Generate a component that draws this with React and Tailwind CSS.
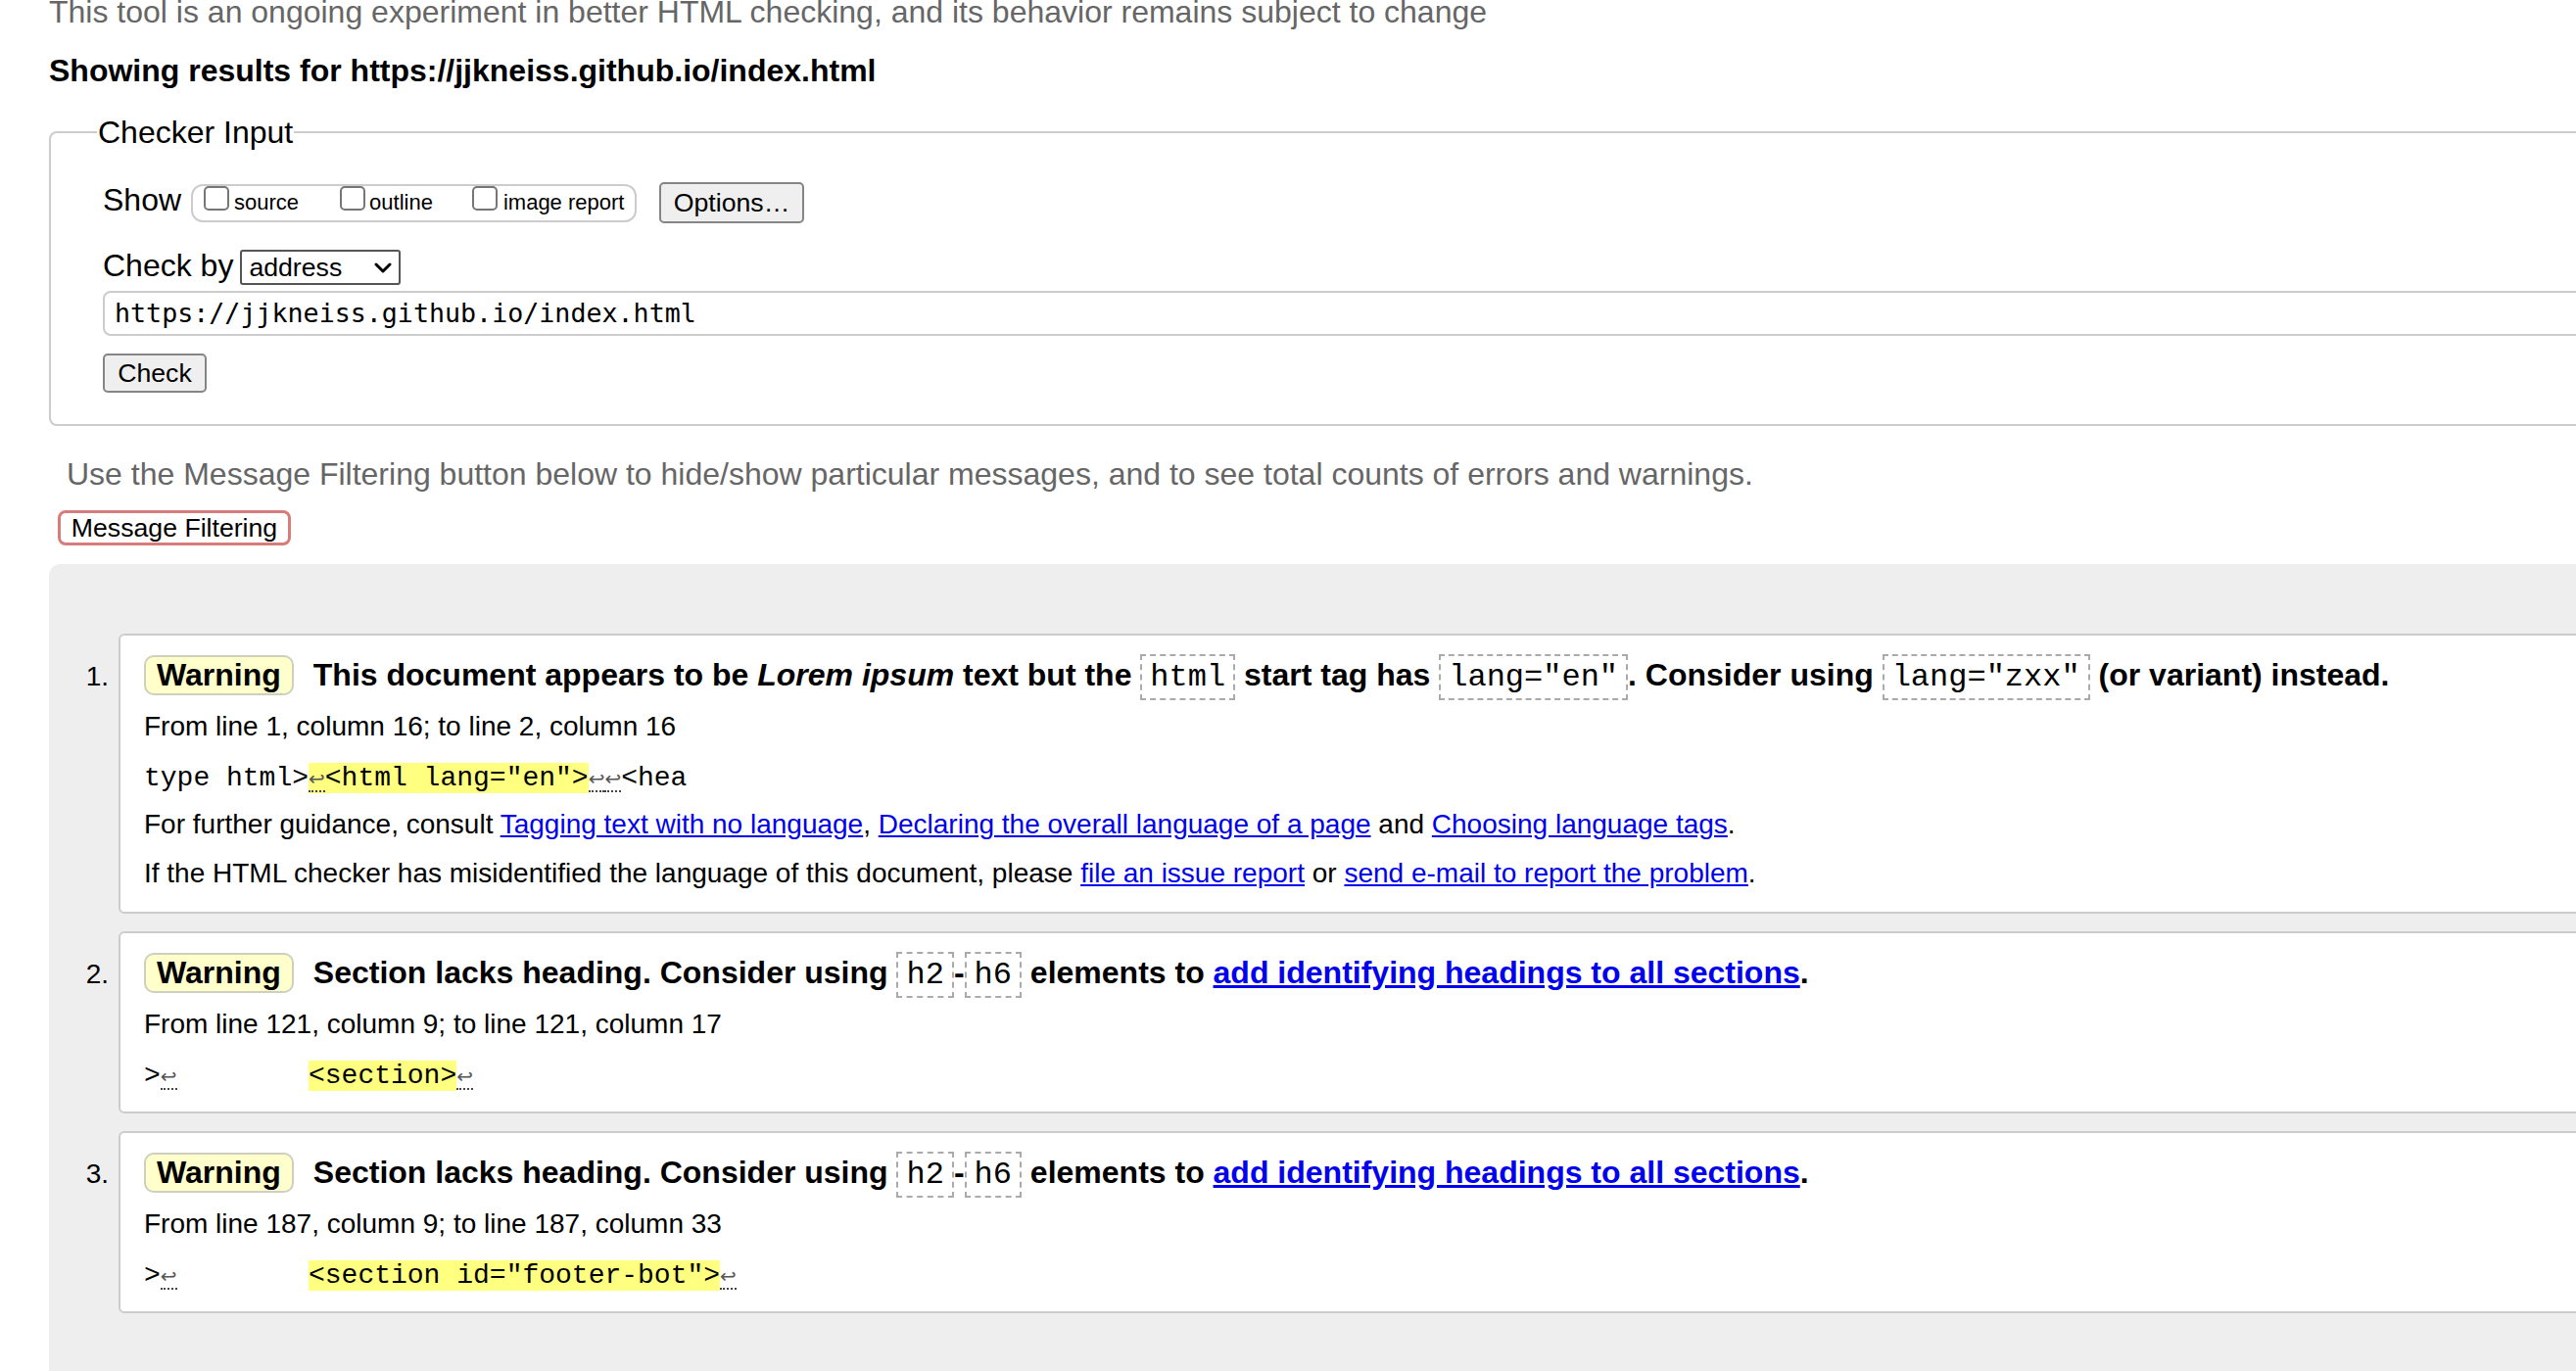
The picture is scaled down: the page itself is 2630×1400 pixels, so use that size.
import React from "react";

const Code = ({ children }) => (
  <code className="font-['Liberation_Mono',monospace] font-normal leading-none px-[8px] py-[3px] border-2 border-dashed border-[#aaa]">
    {children}
  </code>
);

const Arrow = () => (
  <span className="font-['DejaVu_Sans',sans-serif] text-[20px] leading-none text-[#555] border-b-2 border-dotted border-[#444]">↩</span>
);

const Hl = ({ children }) => <span className="bg-[#ffff80]">{children}</span>;

const Badge = () => (
  <span className="inline-block border-2 border-[#cfcfbf] bg-[#ffffcc] rounded-[10px] px-[11px] py-[2px] leading-[33px] mr-[20px]">
    Warning
  </span>
);

const A = ({ children }) => (
  <a href="#" className="text-[#0000ee] underline">
    {children}
  </a>
);

function Message({ n, title, children }) {
  return (
    <li className="flex items-baseline">
      <div className="w-[61px] shrink-0 text-right text-[28px] leading-[44px]">{n}.</div>
      <div className="ml-[10px] flex-1 bg-white border-2 border-[#ccc] rounded-[6px] pl-[24px] pt-[18px] pb-[23px]">
        <p className="text-[32px] font-bold leading-[44px] whitespace-nowrap">
          <Badge />
          {title}
        </p>
        {children}
      </div>
    </li>
  );
}

const Cb = () => <span className="w-[26px] h-[25px] shrink-0 rounded-[5px] border-2 border-[#767676] bg-white" />;

export default function App() {
  return (
    <div className="w-[2630px] h-[1400px] overflow-hidden bg-white text-black font-['Liberation_Sans',Arial,sans-serif] text-[32px]">
      <div className="ml-[50px] w-[2700px]">
        <p className="mt-[-6px] leading-[36px] text-[#666] whitespace-nowrap">
          This tool is an ongoing experiment in better HTML checking, and its behavior remains subject to change
        </p>
        <p className="mt-[24px] leading-[36px] font-bold whitespace-nowrap">
          Showing results for https://jjkneiss.github.io/index.html
        </p>

        <fieldset className="mt-[27px] border-2 border-[#ccc] rounded-[8px] pl-[53px] pb-[32px]">
          <legend className="ml-[-6px] px-[1px] leading-[36px]">Checker Input</legend>
          <div className="mt-[33px] flex items-start h-[42px]">
            <span className="leading-[36px]">Show</span>
            <div className="ml-[10px] mt-[2px] w-[455px] h-[39px] border-2 border-[#ccc] rounded-[12px] flex items-start pl-[11px] text-[22px]">
              <Cb />
              <span className="ml-[5px] mt-[4px] leading-[26px]">source</span>
              <span className="ml-[42px]" />
              <Cb />
              <span className="ml-[4px] mt-[4px] leading-[26px]">outline</span>
              <span className="ml-[40px]" />
              <Cb />
              <span className="ml-[6px] mt-[4px] leading-[26px]">image report</span>
            </div>
            <div className="ml-[23px] w-[148px] h-[42px] border-2 border-[#858585] rounded-[5px] bg-[#efefef] flex items-center justify-center text-[26.67px] leading-none">
              Options…
            </div>
          </div>
          <div className="mt-[25px] flex items-start">
            <span className="leading-[36px]">Check by</span>
            <div className="ml-[7px] mt-[2px] w-[164px] h-[36px] border-2 border-[#555] rounded-[3px] bg-white flex items-center justify-between pl-[7px] pr-[7px] text-[26.67px] leading-none">
              <span>address</span>
              <svg width="18" height="11" viewBox="0 0 18 11">
                <polyline points="2,2 9,9 16,2" fill="none" stroke="#000" strokeWidth="3" strokeLinecap="round" strokeLinejoin="round" />
              </svg>
            </div>
          </div>
          <div className="mt-[6px] h-[46px] border-2 border-[#ccc] rounded-[8px] flex items-center pl-[10px] font-['DejaVu_Sans_Mono',monospace] text-[26.67px] leading-none">
            https://jjkneiss.github.io/index.html
          </div>
          <div className="mt-[18px] w-[106px] h-[40px] border-2 border-[#858585] rounded-[5px] bg-[#efefef] flex items-center justify-center text-[26.67px] leading-none">
            Check
          </div>
        </fieldset>

        <p className="mt-[31px] ml-[18px] leading-[36px] text-[#666] whitespace-nowrap">
          Use the Message Filtering button below to hide/show particular messages, and to see total counts of errors and warnings.
        </p>
        <div className="mt-[19px] ml-[9px] w-[238px] h-[36px] border-[3px] border-[#d77b7b] rounded-[8px] bg-white flex items-center justify-center text-[26.67px] leading-none">
          Message Filtering
        </div>

        <ol className="mt-[19px] bg-[#eee] rounded-tl-[12px] pt-[71px] pb-[80px] flex flex-col gap-[18px]">
          <Message
            n={1}
            title={
              <>
                This document appears to be <em>Lorem ipsum</em> text but the <Code>html</Code> start tag has{" "}
                <Code>lang="en"</Code>. Consider using <Code>lang="zxx"</Code> (or variant) instead.
              </>
            }
          >
            <p className="mt-[15px] text-[28px] leading-[32px]">From line 1, column 16; to line 2, column 16</p>
            <p className="mt-[21px] font-['Liberation_Mono',monospace] text-[28px] leading-[32px] whitespace-pre">
              type html&gt;
              <Hl>
                <Arrow />
                &lt;html lang="en"&gt;
              </Hl>
              <Arrow />
              <Arrow />
              &lt;hea
            </p>
            <p className="mt-[15px] text-[28px] leading-[32px] whitespace-nowrap">
              For further guidance, consult <A>Tagging text with no language</A>,{" "}
              <A>Declaring the overall language of a page</A> and <A>Choosing language tags</A>.
            </p>
            <p className="mt-[18px] text-[28px] leading-[32px] whitespace-nowrap">
              If the HTML checker has misidentified the language of this document, please <A>file an issue report</A> or{" "}
              <A>send e-mail to report the problem</A>.
            </p>
          </Message>
          <Message
            n={2}
            title={
              <>
                Section lacks heading. Consider using <Code>h2</Code>-<Code>h6</Code> elements to{" "}
                <A>add identifying headings to all sections</A>.
              </>
            }
          >
            <p className="mt-[15px] text-[28px] leading-[32px]">From line 121, column 9; to line 121, column 17</p>
            <p className="mt-[21px] pb-[-3px] font-['Liberation_Mono',monospace] text-[28px] leading-[32px] whitespace-pre mb-[-3px]">
              &gt;
              <Arrow />
              {"        "}
              <Hl>&lt;section&gt;</Hl>
              <Arrow />
            </p>
          </Message>
          <Message
            n={3}
            title={
              <>
                Section lacks heading. Consider using <Code>h2</Code>-<Code>h6</Code> elements to{" "}
                <A>add identifying headings to all sections</A>.
              </>
            }
          >
            <p className="mt-[15px] text-[28px] leading-[32px]">From line 187, column 9; to line 187, column 33</p>
            <p className="mt-[21px] font-['Liberation_Mono',monospace] text-[28px] leading-[32px] whitespace-pre mb-[-3px]">
              &gt;
              <Arrow />
              {"        "}
              <Hl>&lt;section id="footer-bot"&gt;</Hl>
              <Arrow />
            </p>
          </Message>
        </ol>
      </div>
    </div>
  );
}
